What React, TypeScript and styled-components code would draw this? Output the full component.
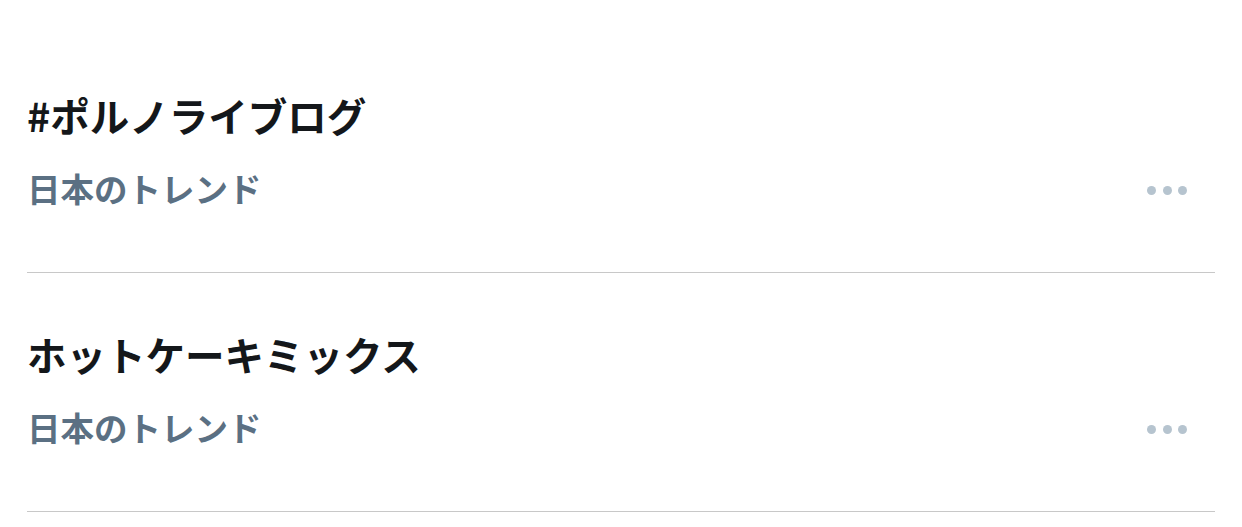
import React from 'react';
import styled, { createGlobalStyle } from 'styled-components';

const GlobalStyle = createGlobalStyle`
  html, body {
    margin: 0;
    padding: 0;
    background: #ffffff;
  }
  body {
    font-family: "Noto Sans CJK JP", "Noto Sans", sans-serif;
  }
`;

interface Trend {
  id: string;
  title: string;
  context: string;
}

const trends: Trend[] = [
  { id: 'porno', title: '#ポルノライブログ', context: '日本のトレンド' },
  { id: 'hotcake', title: 'ホットケーキミックス', context: '日本のトレンド' },
];

export default function App() {
  return (
    <>
      <GlobalStyle />
      <TrendList>
        {trends.map(trend => (
          <TrendRow key={trend.id}>
            <TrendTitle>{trend.title}</TrendTitle>
            <ContextLine>
              <TrendContext>{trend.context}</TrendContext>
              <MoreButton aria-label="more">
                <Dot />
                <Dot />
                <Dot />
              </MoreButton>
            </ContextLine>
          </TrendRow>
        ))}
      </TrendList>
    </>
  );
}

const TrendList = styled.div`
  padding: 34px 27px 0;
  display: flex;
  flex-direction: column;
`;

// each row is 238px tall plus its 1px divider
const TrendRow = styled.div`
  height: 182px;
  box-sizing: content-box;
  padding: 56px 28px 0 0;
  border-bottom: 1px solid #c8c8c8;
  display: flex;
  flex-direction: column;
`;

const TrendTitle = styled.div`
  font-size: 39.5px;
  line-height: 50px;
  font-weight: 700;
  color: #14171a;
  white-space: nowrap;
`;

const ContextLine = styled.div`
  margin-top: 26px;
  height: 44px;
  display: flex;
  align-items: center;
  justify-content: space-between;
`;

const TrendContext = styled.span`
  font-size: 33.5px;
  line-height: 44px;
  font-weight: 700;
  color: #5b7083;
`;

const MoreButton = styled.div`
  display: flex;
  align-items: center;
  gap: 6.5px;
  margin-top: 5px;
`;

const Dot = styled.span`
  width: 9px;
  height: 9px;
  border-radius: 50%;
  background: #b6c4cf;
`;
